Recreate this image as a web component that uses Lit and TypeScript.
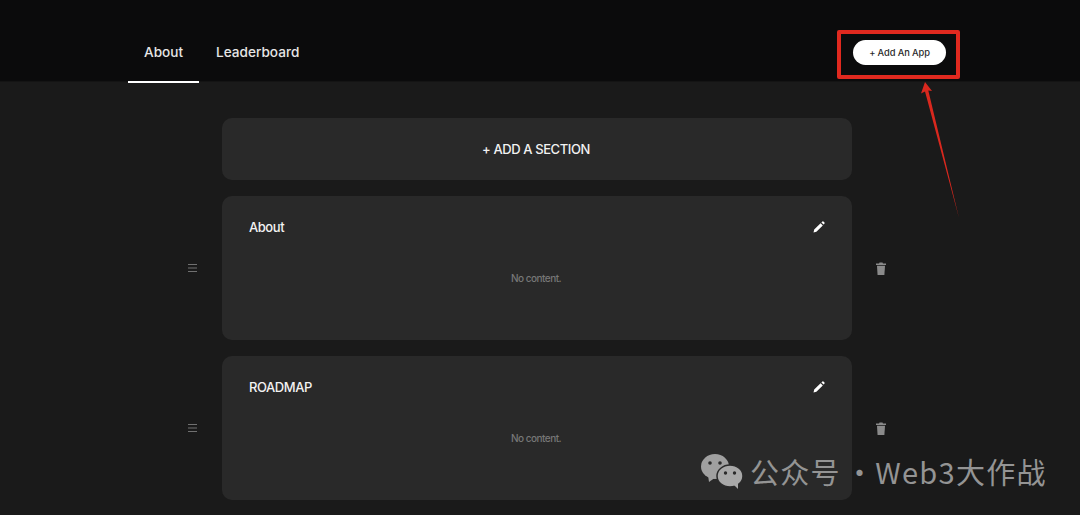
import { LitElement, html, css } from 'lit';
import { customElement } from 'lit/decorators.js';

const sections = ['About', 'ROADMAP'];

@customElement('app-root')
export class AppRoot extends LitElement {
  static styles = css`
    :host {
      display: block;
      position: relative;
      width: 1080px;
      height: 515px;
      overflow: hidden;
      background: #1a1a1a;
      color: #fff;
      font-family: Inter, 'Liberation Sans', sans-serif;
    }
    .header {
      height: 82px;
      box-sizing: border-box;
      padding: 0 134px 0 128px;
      display: flex;
      align-items: flex-start;
      justify-content: space-between;
      background: #0b0b0c;
      border-bottom: 1px solid #141414;
    }
    .tabs {
      display: flex;
      gap: 1px;
    }
    .tab {
      padding: 22px 16px 0;
      display: flex;
      align-items: center;
      box-sizing: border-box;
      height: 83px;
      font-size: 13.6px;
      font-weight: 500;
      color: #e6e6e6;
      border-bottom: 2px solid transparent;
    }
    .tab.active {
      border-bottom-color: #fff;
    }
    .add-app {
      margin-top: 40px;
      width: 93px;
      height: 25px;
      border-radius: 13px;
      background: #fff;
      color: #2a2a2a;
      display: flex;
      align-items: center;
      justify-content: center;
      font-size: 9.3px;
      font-weight: 500;
      letter-spacing: -0.1px;
    }
    .main {
      padding: 36px 0 0 222px;
      display: flex;
      flex-direction: column;
      gap: 16px;
    }
    .add-section {
      width: 630px;
      height: 62px;
      border-radius: 10px;
      background: #292929;
      display: flex;
      align-items: center;
      justify-content: center;
      font-size: 13px;
      font-weight: 500;
      letter-spacing: -0.4px;
      color: #f2f2f2;
      padding-right: 2px;
      box-sizing: border-box;
    }
    .row {
      display: flex;
      align-items: center;
      margin-left: -34px;
    }
    .handle {
      width: 34px;
      display: flex;
    }
    .card {
      width: 630px;
      height: 144px;
      box-sizing: border-box;
      border-radius: 10px;
      background: #292929;
      padding: 22px 27px;
      display: flex;
      flex-direction: column;
    }
    .card-head {
      display: flex;
      align-items: center;
      justify-content: space-between;
      height: 18px;
      font-size: 13px;
      font-weight: 500;
      letter-spacing: -0.45px;
      color: #f2f2f2;
    }
    .empty {
      margin-top: 36px;
      padding-right: 2px;
      text-align: center;
      font-size: 10px;
      font-weight: 500;
      letter-spacing: -0.5px;
      color: #777;
    }
    .trash {
      margin-left: 24px;
      display: flex;
    }
    .callout {
      position: absolute;
      left: 837px;
      top: 30px;
      width: 123px;
      height: 49px;
      box-sizing: border-box;
      border: 4px solid #e0291f;
      border-radius: 2px;
    }
    .arrow {
      position: absolute;
      left: 900px;
      top: 70px;
      pointer-events: none;
    }
    .watermark {
      position: absolute;
      left: 700px;
      top: 452px;
      display: flex;
      align-items: center;
      gap: 6px;
      font-family: 'Noto Sans CJK SC', 'Noto Sans', sans-serif;
      font-size: 29px;
      line-height: 38px;
      color: #949494;
      letter-spacing: 1.3px;
      white-space: nowrap;
    }
    .dot {
      margin: 0 0 0 4px;
    }
  `;

  private pencil() {
    return html`<svg width="12" height="12" viewBox="0 0 12 12" fill="#fff">
      <path d="M0.5 11.5 L1.2 8.6 L7.6 2.2 L9.8 4.4 L3.4 10.8 Z M8.4 1.4 L9.4 0.5 Q9.9 0.1 10.4 0.5 L11.5 1.6 Q11.9 2.1 11.5 2.6 L10.6 3.6 Z" />
    </svg>`;
  }

  private bars() {
    return html`<svg width="9" height="10" viewBox="0 0 9 10" stroke="#707070" stroke-width="1">
      <path d="M0 1.5H9M0 5H9M0 8.500H9" />
    </svg>`;
  }

  private bin() {
    return html`<svg width="10" height="13" viewBox="0 0 10 13" fill="#8a8a8a">
      <path d="M3.5 0.5H6.5L7 1.5H10V3H0V1.5H3Z" />
      <path d="M1 3.8H9L8.4 13H1.6Z" />
    </svg>`;
  }

  render() {
    return html`
      <div class="header">
        <div class="tabs">
          <div class="tab active">About</div>
          <div class="tab">Leaderboard</div>
        </div>
        <div class="add-app">+ Add An App</div>
      </div>
      <div class="main">
        <div class="add-section">+ ADD A SECTION</div>
        ${sections.map(
          (name) => html`
            <div class="row">
              <div class="handle">${this.bars()}</div>
              <div class="card">
                <div class="card-head"><span>${name}</span>${this.pencil()}</div>
                <div class="empty">No content.</div>
              </div>
              <div class="trash">${this.bin()}</div>
            </div>
          `
        )}
      </div>
      <div class="callout"></div>
      <svg class="arrow" width="70" height="155" viewBox="0 0 70 155" fill="#d9281e">
        <path d="M25 12 L32 21 L28.300 20.500 L59 148 L25 21.500 L21 23.500 Z" />
      </svg>
      <div class="watermark">
        <svg width="44" height="36" viewBox="0 0 44 36">
          <ellipse cx="15" cy="13.5" rx="14" ry="12.5" fill="#a0a0a0" />
          <path d="M8 22 L9 29 L16 24 Z" fill="#a0a0a0" />
          <circle cx="10" cy="10" r="1.8" fill="#2a2a2a" />
          <circle cx="20" cy="10" r="1.8" fill="#2a2a2a" />
          <ellipse cx="30" cy="23" rx="13" ry="11" fill="#a8a8a8" stroke="#2a2a2a" stroke-width="1.5" />
          <path d="M34 32 L38 36 L38 29 Z" fill="#a8a8a8" />
          <circle cx="25.500" cy="20" r="1.7" fill="#2a2a2a" />
          <circle cx="34.500" cy="20" r="1.7" fill="#2a2a2a" />
        </svg>
        <span>公众号<span class="dot">·</span>Web3大作战</span>
      </div>
    `;
  }
}
